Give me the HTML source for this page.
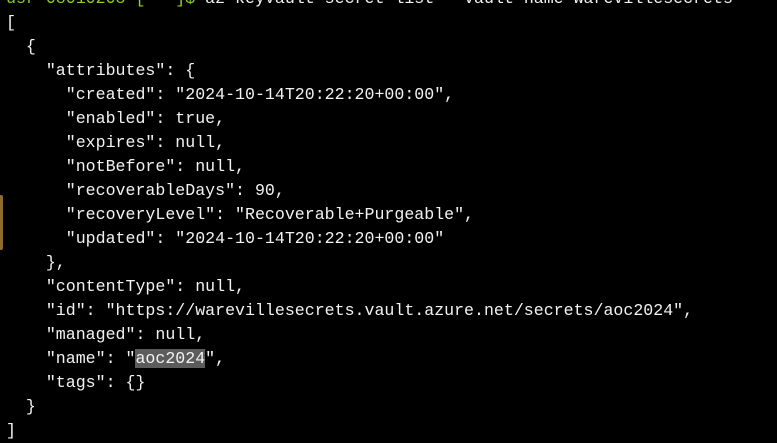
<!DOCTYPE html>
<html><head><style>
html,body{margin:0;padding:0;background:#000;width:777px;height:429px;overflow:hidden}
pre{position:absolute;left:6px;top:-13px;margin:0;font-family:"Liberation Mono",monospace;font-size:16.6px;line-height:24px;color:#f2f2f2}
.g{color:#8ccf1f}
.h{background:#5c5c5c}
.bar{position:absolute;left:0;top:195px;width:3px;height:55px;background:#8f6b2e;border-radius:0 2px 2px 0}
</style></head><body>
<div class="bar"></div>
<pre><span class="g">usr-08010208 [ ~ ]$</span> az keyvault secret list --vault-name warevillesecrets
[
  {
    "attributes": {
      "created": "2024-10-14T20:22:20+00:00",
      "enabled": true,
      "expires": null,
      "notBefore": null,
      "recoverableDays": 90,
      "recoveryLevel": "Recoverable+Purgeable",
      "updated": "2024-10-14T20:22:20+00:00"
    },
    "contentType": null,
    "id": "https://warevillesecrets.vault.azure.net/secrets/aoc2024",
    "managed": null,
    "name": "<span class="h">aoc2024</span>",
    "tags": {}
  }
]</pre>
</body></html>
